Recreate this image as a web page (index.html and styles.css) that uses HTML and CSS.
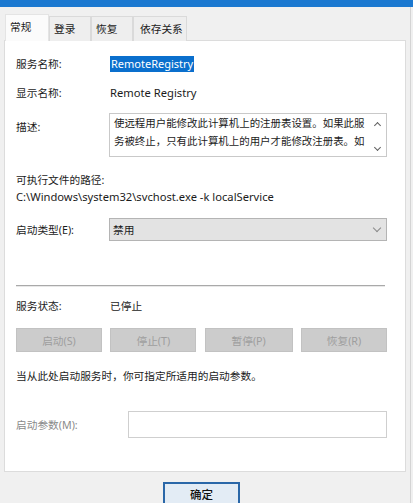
FILE: index.html
```html
<!DOCTYPE html>
<html>
  <head>
    <title>RemoteRegistry 的属性</title>
    <link rel="stylesheet" href="styles.css">
  </head>
  <body>
    <div class="titlebar"></div>
    <div class="window">
      <ul class="tabs">
        <li class="tab active">常规</li>
        <li class="tab">登录</li>
        <li class="tab">恢复</li>
        <li class="tab wide">依存关系</li>
      </ul>
      <div class="panel">
        <div class="row first">
          <span class="label">服务名称:</span>
          <span class="value"><span class="selected">RemoteRegistry</span></span>
        </div>
        <div class="row gap13">
          <span class="label">显示名称:</span>
          <span class="value latin">Remote Registry</span>
        </div>
        <div class="row desc">
          <span class="label desc-label">描述:</span>
          <div class="textbox">
            <div class="textbox-text">
              <div>使远程用户能修改此计算机上的注册表设置。如果此服</div>
              <div>务被终止，只有此计算机上的用户才能修改注册表。如</div>
            </div>
            <div class="scroll">
              <span class="arrow up"></span>
              <span class="arrow down"></span>
            </div>
          </div>
        </div>
        <div class="line exe">可执行文件的路径:</div>
        <div class="line path latin">C:\Windows\system32\svchost.exe -k localService</div>
        <div class="row startup">
          <span class="label">启动类型(E):</span>
          <div class="select">
            <span>禁用</span>
            <span class="chevron"></span>
          </div>
        </div>
        <hr class="sep">
        <div class="row status">
          <span class="label">服务状态:</span>
          <span class="value">已停止</span>
        </div>
        <div class="buttons">
          <button class="btn" disabled>启动(S)</button>
          <button class="btn" disabled>停止(T)</button>
          <button class="btn wide" disabled>暂停(P)</button>
          <button class="btn" disabled>恢复(R)</button>
        </div>
        <div class="line hint">当从此处启动服务时，你可指定所适用的启动参数。</div>
        <div class="params">
          <span class="label disabled">启动参数(M):</span>
          <div class="input"></div>
        </div>
      </div>
      <div class="footer">
        <button class="ok">确定</button>
      </div>
    </div>
  </body>
</html>
```

FILE: styles.css
```css
/* service properties dialog */
body {
  margin: 0;
  background-color: #f0f0f0;
  font-family: "Noto Sans", "Noto Sans CJK SC", sans-serif;
  font-size: 10.7px;
  color: #1b1b1b;
  overflow: hidden;
}
.latin {
  font-size: 11.2px;
}
.titlebar {
  height: 7px;
  background-color: #1b78d0;
}
.window {
  border-right: 1px solid #d4d4d4;
  margin-right: 2px;
  height: 496px;
}
.tabs {
  list-style: none;
  margin: 0;
  padding: 7px 0 0 5px;
  display: flex;
  align-items: flex-end;
}
.tab {
  height: 24px;
  width: 36px;
  line-height: 25px;
  padding-left: 4px;
  background-color: #eeeeee;
  border: 1px solid #dadada;
  border-bottom: none;
  margin-bottom: -1px;
}
.tab.wide {
  width: 46px;
  padding-left: 6px;
}
.tab.active {
  height: 26px;
  line-height: 24px;
  width: 38px;
  background-color: #fbfbfb;
  position: relative;
  z-index: 1;
  border-color: #e4e4e4;
  margin-bottom: -1px;
}
.panel {
  margin: 0 4px 0 4px;
  background-color: #ffffff;
  border: 1px solid #dcdcdc;
  padding: 0 18px 33px 11px;
}
.row {
  display: flex;
  align-items: center;
  line-height: 16px;
}
.label {
  width: 94px;
  flex: none;
}
.first {
  margin-top: 15px;
}
.gap13 {
  margin-top: 13px;
}
.selected {
  background-color: #0a6fcd;
  color: #ffffff;
  padding: 0 1px;
  display: inline-block;
  line-height: 16px;
  font-size: 11px;
}
.desc {
  margin-top: 12px;
  align-items: flex-start;
}
.desc-label {
  margin-top: 6px;
}
.textbox {
  flex: 1;
  height: 42px;
  border: 1px solid #c9c9c9;
  display: flex;
  overflow: hidden;
  margin-left: -1px;
}
.textbox-text {
  flex: 1;
  padding: 0 0 0 4px;
  line-height: 18px;
  font-size: 10.45px;
  white-space: nowrap;
  overflow: hidden;
}
.scroll {
  width: 18px;
  display: flex;
  flex-direction: column;
  justify-content: space-between;
  align-items: center;
  padding: 7px 0 6px;
}
.arrow {
  width: 4px;
  height: 4px;
  border-left: 1px solid #606060;
  border-top: 1px solid #606060;
}
.arrow.up {
  transform: rotate(45deg);
  margin-top: 2px;
}
.arrow.down {
  transform: rotate(225deg);
}
.line {
  line-height: 16px;
}
.exe {
  margin-top: 15px;
}
.path {
  margin-top: 1px;
}
.startup {
  margin-top: 13px;
}
.select {
  flex: 1;
  height: 21px;
  margin-left: -1px;
  background-color: #e3e3e3;
  border: 1px solid #b4b4b4;
  display: flex;
  align-items: center;
  justify-content: space-between;
  padding: 0 6px 0 3px;
}
.chevron {
  width: 5px;
  height: 5px;
  border-right: 1px solid #8a8a8a;
  border-bottom: 1px solid #8a8a8a;
  transform: rotate(45deg);
  margin-top: -3px;
}
.sep {
  border: none;
  border-top: 1px solid #a9a9a9;
  box-shadow: 0 1px 0 #e8e8e8;
  margin: 44px 2px 0 0;
}
.status {
  margin-top: 12px;
}
.buttons {
  display: grid;
  grid-template-columns: 86px 86px 88px 86px;
  justify-content: space-between;
  margin-top: 14px;
}
.btn {
  height: 24px;
  background-color: #cccccc;
  border: 1px solid #c2c2c2;
  color: #9e9e9e;
  font-family: inherit;
  font-size: 10.7px;
  padding: 0;
}
.hint {
  margin-top: 16px;
}
.params {
  display: flex;
  align-items: center;
  margin-top: 27px;
}
.params .label {
  width: 112px;
}
.disabled {
  color: #8a8a8a;
}
.input {
  flex: 1;
  height: 25px;
  border: 1px solid #cfcfcf;
  background-color: #ffffff;
}
.footer {
  display: flex;
  padding: 10px 0 0 163px;
}
.ok {
  width: 77px;
  height: 26px;
  background-color: #e3ecf5;
  border: 2px solid #2a67a8;
  font-family: inherit;
  font-size: 11.5px;
  font-weight: 500;
  color: #111111;
  padding: 0;
  padding-bottom: 3px;
}
```
